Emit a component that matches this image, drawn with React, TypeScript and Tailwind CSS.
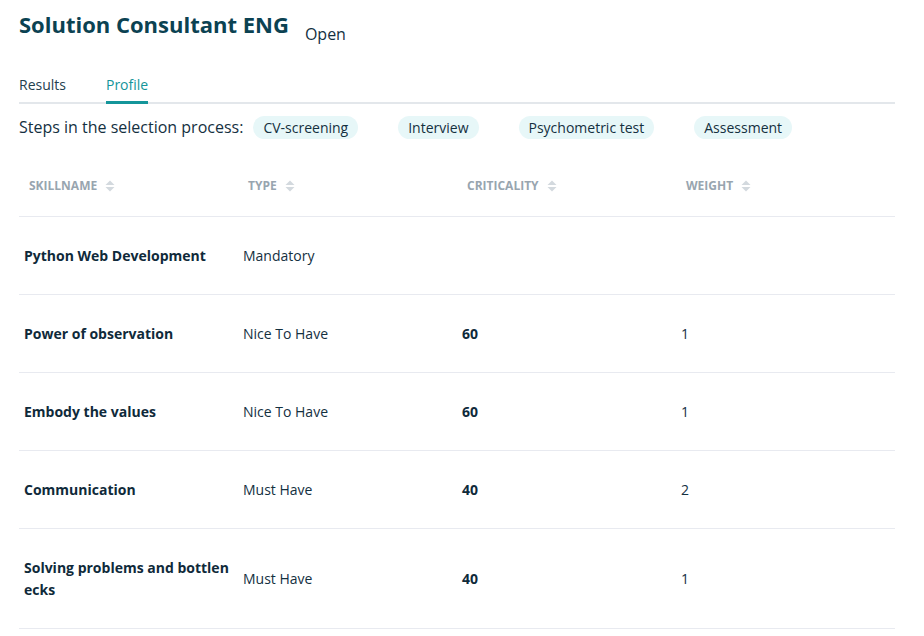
import React from "react";

// Skill profile table for a vacancy

interface SkillRow {
  name: string;
  type: string;
  criticality?: number;
  weight?: number;
}

const STEPS = ["CV-screening", "Interview", "Psychometric test", "Assessment"];

const ROWS: SkillRow[] = [
  { name: "Python Web Development", type: "Mandatory" },
  { name: "Power of observation", type: "Nice To Have", criticality: 60, weight: 1 },
  { name: "Embody the values", type: "Nice To Have", criticality: 60, weight: 1 },
  { name: "Communication", type: "Must Have", criticality: 40, weight: 2 },
  { name: "Solving problems and bottlenecks", type: "Must Have", criticality: 40, weight: 1 },
];

const COLUMNS = ["Skillname", "Type", "Criticality", "Weight"];

function SortIcon() {
  return (
    <svg width="10" height="12" viewBox="0 0 10 12" className="ml-[8px] inline-block">
      <path d="M5 0.5 L9.5 5 L0.5 5 Z" fill="#d3d9de" />
      <path d="M5 11.5 L9.5 7 L0.5 7 Z" fill="#d3d9de" />
    </svg>
  );
}

export default function App() {
  return (
    <div
      className="min-h-screen bg-white px-[19px] pt-[9px] text-[#14303f]"
      style={{ fontFamily: '"Open Sans", sans-serif' }}
    >
      <div className="flex items-end gap-4">
        <h1 className="text-[22px] font-bold leading-[30px] text-[#0b4252]">Solution Consultant ENG</h1>
        <span className="text-[16px] leading-[22px] text-[#14303f] -mb-[6px]">Open</span>
      </div>

      <div className="mt-[36px] flex gap-10 border-b-2 border-[#e3e7eb] w-[876px]">
        <div className="pb-[7px] text-[14px] leading-[20px] text-[#24404e]">Results</div>
        <div className="-mb-[2px] border-b-[3px] border-[#14959a] pb-[6px] text-[14px] leading-[20px] text-[#14959a]">
          Profile
        </div>
      </div>

      <div className="mt-[11px] flex items-center">
        <span className="text-[16px] leading-[24px] text-[#14303f]">Steps in the selection process:</span>
        <div className="ml-[10px] flex gap-10">
          {STEPS.map((s) => (
            <span
              key={s}
              className="rounded-full bg-[#e7f7f8] px-[10px] text-[14px] leading-[23px] text-[#14303f]"
            >
              {s}
            </span>
          ))}
        </div>
      </div>

      <table className="mt-[15px] w-[876px] table-fixed border-collapse">
        <thead>
          <tr className="border-b border-[#e8eaf0]">
            {COLUMNS.map((c) => (
              <th
                key={c}
                className="w-[219px] px-[10px] pt-[21px] pb-[20px] text-left text-[12px] font-bold uppercase leading-[21px] text-[#98a5af]"
              >
                <span className="inline-flex items-center">
                  {c}
                  <SortIcon />
                </span>
              </th>
            ))}
          </tr>
        </thead>
        <tbody>
          {ROWS.map((r) => (
            <tr key={r.name} className="border-b border-[#e8eaf0]">
              <td className="px-[5px] pt-[28px] pb-[27px] text-[14px] font-bold leading-[22px] break-all text-[#0f2a3a]">
                {r.name}
              </td>
              <td className="px-[5px] pt-[28px] pb-[27px] text-[14px] leading-[22px] text-[#14303f]">{r.type}</td>
              <td className="px-[5px] pt-[28px] pb-[27px] text-[14px] font-bold leading-[22px] text-[#0f2a3a]">
                {r.criticality ?? ""}
              </td>
              <td className="px-[5px] pt-[28px] pb-[27px] text-[14px] leading-[22px] text-[#14303f]">
                {r.weight ?? ""}
              </td>
            </tr>
          ))}
        </tbody>
      </table>
    </div>
  );
}
